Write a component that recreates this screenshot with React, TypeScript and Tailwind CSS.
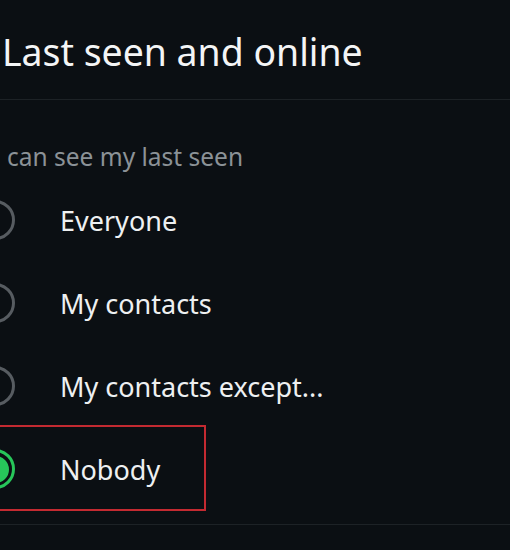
import React from "react";

const options = ["Everyone", "My contacts", "My contacts except...", "Nobody"];

const Radio = ({ checked }: { checked: boolean }) => (
  <div
    className={`-ml-[25px] flex h-[40px] w-[40px] shrink-0 items-center justify-center rounded-full border-[3px] ${
      checked ? "border-[#27c65a]" : "border-[#575c61]"
    }`}
  >
    {checked && <div className="h-[27px] w-[27px] rounded-full bg-[#27c65a]" />}
  </div>
);

const App = () => {
  const selected = "Nobody";

  return (
    <div
      className="h-[550px] w-[510px] overflow-hidden bg-[#0b0f13] text-white"
      style={{ fontFamily: '"Noto Sans", "Open Sans", sans-serif' }}
    >
      <header className="flex h-[100px] items-center border-b border-[#1d2226] pl-[2px]">
        <h1 className="mt-[4px] text-[37.4px] font-normal leading-none text-[#f4f5f6]">
          Last seen and online
        </h1>
      </header>

      <div className="pt-[45px] pl-[7px] text-[24.5px] leading-none text-[#8b9297]">
        can see my last seen
      </div>

      <div className="mt-[9px] border-b border-[#1d2226] pb-[13px]">
        {options.map((opt) => {
          const checked = opt === selected;
          return (
            <div key={opt} className="relative flex h-[83px] items-center">
              <Radio checked={checked} />
              <span className="ml-[45px] text-[27px] leading-none text-[#eef0f1]">
                {opt}
              </span>
              {checked && (
                <div className="pointer-events-none absolute left-[-2px] top-[-3px] h-[86px] w-[208px] border-2 border-[#c42a31]" />
              )}
            </div>
          );
        })}
      </div>
    </div>
  );
};

export default App;
